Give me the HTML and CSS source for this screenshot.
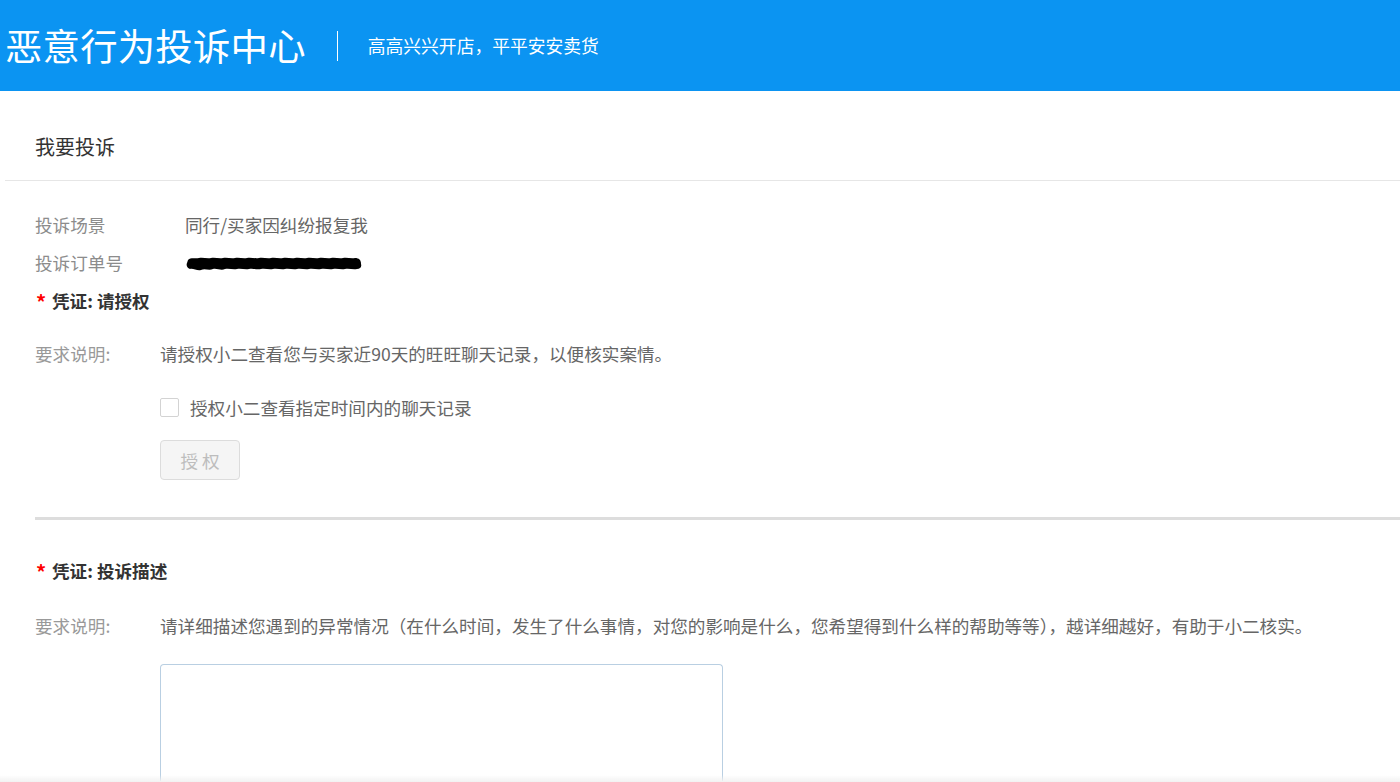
FILE: index.html
```html
<!DOCTYPE html>
<html lang="zh-CN">
<head>
<meta charset="utf-8">
<title>恶意行为投诉中心</title>
<link rel="stylesheet" href="styles.css">
</head>
<body>
<header class="topbar">
  <h1 class="brand">恶意行为投诉中心</h1>
  <span class="sep"></span>
  <span class="slogan">高高兴兴开店，平平安安卖货</span>
</header>
<main class="page">
  <div class="page-title">我要投诉</div>
  <div class="content">
    <div class="info-row"><span class="info-label">投诉场景</span><span class="info-value">同行/买家因纠纷报复我</span></div>
    <div class="info-row"><span class="info-label">投诉订单号</span><span class="info-value"><svg class="redact" width="178" height="16" viewBox="0 0 178 16"><path d="M3 4 C6 1 10 3 14 2 C18 1 22 3 26 2 C30 1 34 3 38 2 C42 1 46 3 50 2 C54 1 58 3 62 2 C66 1 70 3 74 2 C78 1 82 3 86 2 C90 1 94 3 98 2 C102 1 106 3 110 2 C114 1 118 3 122 2 C126 1 130 3 134 2 C138 1 142 3 146 2 C150 1 154 3 158 2 C162 1 166 3 170 2 C174 2 176 4 176 8 C177 11 175 13 172 13 C168 14 164 12 160 13 C156 14 152 12 148 13 C144 14 140 12 136 13 C132 14 128 12 124 13 C120 14 116 12 112 13 C108 14 104 12 100 13 C96 14 92 12 88 13 C84 14 80 12 76 13 C72 14 68 12 64 13 C60 14 56 12 52 13 C48 14 44 12 40 13 C36 15 32 12 28 13 C24 15 20 12 16 14 C12 15 8 12 5 13 C2 12 1 9 2 7 Z" fill="#000"/></svg></span></div>
    <div class="proof-title"><span class="req">*</span>凭证: 请授权</div>
    <div class="desc-row"><span class="desc-label">要求说明:</span><span class="desc-text">请授权小二查看您与买家近90天的旺旺聊天记录，以便核实案情。</span></div>
    <label class="check-row"><span class="checkbox"></span><span class="check-text">授权小二查看指定时间内的聊天记录</span></label>
    <button class="btn-auth" disabled>授 权</button>
    <div class="thick-line"></div>
    <div class="proof-title proof-title-2"><span class="req">*</span>凭证: 投诉描述</div>
    <div class="desc-row desc-row-2"><span class="desc-label">要求说明:</span><span class="desc-text">请详细描述您遇到的异常情况（在什么时间，发生了什么事情，对您的影响是什么，您希望得到什么样的帮助等等），越详细越好，有助于小二核实。</span></div>
    <textarea class="desc-input"></textarea>
  </div>
</main>
<div class="bottom-shade"></div>
</body>
</html>
```

FILE: styles.css
```css
* { box-sizing: border-box; }
html, body { margin: 0; padding: 0; background: #fff; }
body {
  font-family: "Noto Sans CJK SC", "Microsoft YaHei", "Noto Sans", sans-serif;
  font-size: 17.6px;
  color: #666;
  height: 782px;
  overflow: hidden;
}
.topbar {
  height: 91px;
  background: #0b94f2;
  display: flex;
  align-items: center;
  padding-left: 5px;
  color: #fff;
}
.brand {
  margin: 0;
  font-size: 37.4px;
  font-weight: 400;
  line-height: 1;
  letter-spacing: 0.2px;
}
.sep {
  width: 1px;
  height: 30px;
  background: #fff;
  margin: 0 30px 0 31px;
}
.slogan {
  font-size: 17.8px;
  line-height: 1;
  letter-spacing: 0;
}
.page { margin-left: 5px; }
.page-title {
  padding: 44px 0 22px 30px;
  line-height: 24px;
  height: 90px;
  font-size: 20px;
  color: #333;
  border-bottom: 1px solid #e6e6e6;
}
.content { padding: 25px 0 0 30px; }
.info-row {
  display: flex;
  align-items: center;
  height: 38px;
  line-height: 38px;
}
.info-label { width: 150px; color: #8c8c8c; }
.info-value { color: #666; display: flex; align-items: center; }
.redact { display: block; margin-top: 2px; }
.proof-title {
  height: 38px;
  line-height: 38px;
  font-weight: 700;
  color: #333;
  display: flex;
  align-items: center;
}
.req {
  color: #f00;
  font-weight: 700;
  font-size: 20px;
  width: 17px;
  padding-left: 1px;
  line-height: 38px;
  position: relative;
  top: 1px;
}
.desc-row {
  display: flex;
  height: 36px;
  line-height: 36px;
  margin-top: 16px;
}
.desc-label { width: 125px; color: #999; }
.desc-text { color: #666; white-space: nowrap; }
.check-row {
  display: flex;
  align-items: center;
  height: 36px;
  margin-top: 17px;
  margin-left: 125px;
}
.checkbox {
  width: 19px;
  height: 19px;
  border: 1px solid #d3d3d3;
  border-radius: 2px;
  background: #fff;
  margin-right: 11px;
}
.check-text { color: #666; }
.btn-auth {
  display: block;
  margin: 15px 0 0 125px;
  width: 80px;
  height: 40px;
  border: 1px solid #dcdcdc;
  border-radius: 4px;
  background: #f5f5f5;
  color: #bdbdbd;
  font-family: inherit;
  font-size: 17.6px;
  padding: 0;
}
.thick-line {
  height: 3px;
  background: #dddddd;
  margin-top: 37px;
}
.proof-title-2 { margin-top: 32px; }
.desc-row-2 { margin-top: 18px; }
.desc-input {
  display: block;
  margin: 20px 0 0 125px;
  width: 563px;
  height: 117px;
  border: 1px solid #b9cfe2;
  border-bottom: 0;
  border-radius: 4px 4px 0 0;
  resize: none;
  background: #fff;
}
.bottom-shade {
  position: fixed;
  left: 0;
  right: 0;
  bottom: 0;
  height: 7px;
  background: linear-gradient(to bottom, rgba(240,240,240,0), #f2f2f2);
}
```
